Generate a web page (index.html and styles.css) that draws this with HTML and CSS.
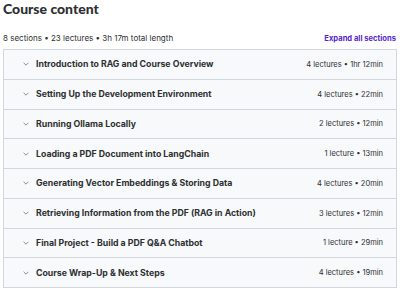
FILE: index.html
```html
<!DOCTYPE html>
<html lang="en">
<head>
    <meta charset="UTF-8">
    <meta name="viewport" content="width=device-width, initial-scale=1.0">
    <title>Course content</title>
    <link rel="stylesheet" href="styles.css">
</head>
<body>
    <h2 class="title">Course content</h2>
    <div class="summary">
        <span>8 sections • 23 lectures • 3h 17m total length</span>
        <button class="expand">Expand all sections</button>
    </div>
    <div class="sections">
        <div class="section">
            <span class="chevron"><svg viewBox="0 0 10 6" width="6" height="4"><path d="M1 1l4 4 4-4" fill="none" stroke="currentColor" stroke-width="1.3"/></svg></span>
            <span class="section-title">Introduction to RAG and Course Overview</span>
            <span class="section-info">4 lectures • 1hr 12min</span>
        </div>
        <div class="section">
            <span class="chevron"><svg viewBox="0 0 10 6" width="6" height="4"><path d="M1 1l4 4 4-4" fill="none" stroke="currentColor" stroke-width="1.3"/></svg></span>
            <span class="section-title">Setting Up the Development Environment</span>
            <span class="section-info">4 lectures • 22min</span>
        </div>
        <div class="section">
            <span class="chevron"><svg viewBox="0 0 10 6" width="6" height="4"><path d="M1 1l4 4 4-4" fill="none" stroke="currentColor" stroke-width="1.3"/></svg></span>
            <span class="section-title">Running Ollama Locally</span>
            <span class="section-info">2 lectures • 12min</span>
        </div>
        <div class="section">
            <span class="chevron"><svg viewBox="0 0 10 6" width="6" height="4"><path d="M1 1l4 4 4-4" fill="none" stroke="currentColor" stroke-width="1.3"/></svg></span>
            <span class="section-title">Loading a PDF Document into LangChain</span>
            <span class="section-info">1 lecture • 13min</span>
        </div>
        <div class="section">
            <span class="chevron"><svg viewBox="0 0 10 6" width="6" height="4"><path d="M1 1l4 4 4-4" fill="none" stroke="currentColor" stroke-width="1.3"/></svg></span>
            <span class="section-title">Generating Vector Embeddings &amp; Storing Data</span>
            <span class="section-info">4 lectures • 20min</span>
        </div>
        <div class="section">
            <span class="chevron"><svg viewBox="0 0 10 6" width="6" height="4"><path d="M1 1l4 4 4-4" fill="none" stroke="currentColor" stroke-width="1.3"/></svg></span>
            <span class="section-title">Retrieving Information from the PDF (RAG in Action)</span>
            <span class="section-info">3 lectures • 12min</span>
        </div>
        <div class="section">
            <span class="chevron"><svg viewBox="0 0 10 6" width="6" height="4"><path d="M1 1l4 4 4-4" fill="none" stroke="currentColor" stroke-width="1.3"/></svg></span>
            <span class="section-title">Final Project - Build a PDF Q&amp;A Chatbot</span>
            <span class="section-info">1 lecture • 29min</span>
        </div>
        <div class="section">
            <span class="chevron"><svg viewBox="0 0 10 6" width="6" height="4"><path d="M1 1l4 4 4-4" fill="none" stroke="currentColor" stroke-width="1.3"/></svg></span>
            <span class="section-title">Course Wrap-Up &amp; Next Steps</span>
            <span class="section-info">4 lectures • 19min</span>
        </div>
    </div>
</body>
</html>
```

FILE: styles.css
```css
body {
    font-family: "Inter", "Noto Sans", sans-serif;
    margin: 0 3px;
    color: #2d2f31;
    background: #fff;
}
.title {
    font-family: "Lato", sans-serif;
    font-size: 14px;
    font-weight: 900;
    margin: 0;
    padding-top: 1px;
    line-height: 16px;
}
.summary {
    display: flex;
    justify-content: space-between;
    align-items: center;
    font-size: 8px;
    color: #2d2f31;
    height: 22px;
    margin-top: 10px;
    padding-right: 1px;
}
.expand {
    border: none;
    background: none;
    padding: 0;
    font-family: inherit;
    font-size: 7.6px;
    font-weight: 700;
    color: #5624d0;
}
.sections {
    border: 1px solid #d1d7dc;
    border-bottom: none;
}
.section {
    display: flex;
    align-items: center;
    height: 28.75px;
    background: #f7f9fa;
    border-bottom: 1px solid #d1d7dc;
    padding: 0 13px 0 19px;
}
.chevron {
    display: flex;
    color: #6a6f73;
    width: 13px;
}
.section-title {
    flex: 1;
    font-size: 8.75px;
    font-weight: 700;
}
.section-info {
    font-size: 7.5px;
    color: #2d2f31;
}
```
